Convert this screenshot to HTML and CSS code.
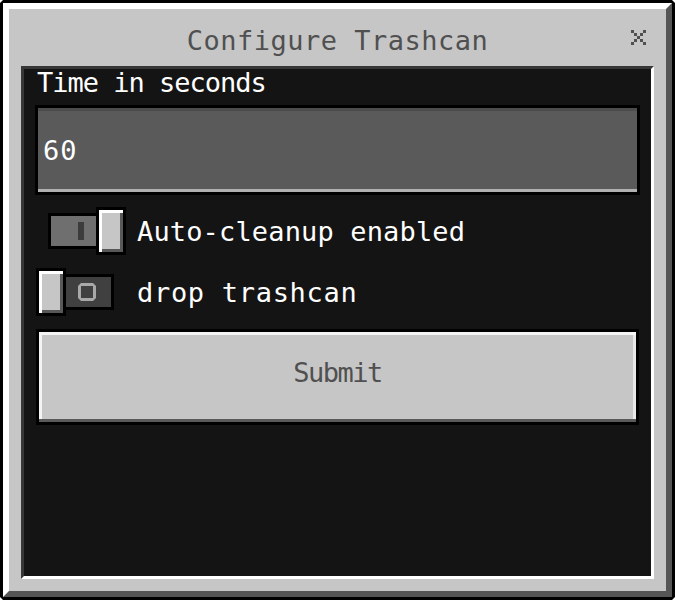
FILE: index.html
```html
<!DOCTYPE html>
<html lang="en">
<head>
    <meta charset="UTF-8">
    <title>Configure Trashcan</title>
    <link rel="stylesheet" href="styles.css">
</head>
<body>

<div class="frame">
    <div class="window">
        <div class="header">
            <div class="title">Configure Trashcan</div>
            <div class="close">
                <svg width="15" height="15" viewBox="0 0 5 5" shape-rendering="crispEdges">
                    <path d="M0 0h1v1H0zM4 0h1v1H4zM1 1h1v1H1zM3 1h1v1H3zM2 2h1v1H2zM1 3h1v1H1zM3 3h1v1H3zM0 4h1v1H0zM4 4h1v1H4z" fill="#505050"/>
                </svg>
            </div>
        </div>

        <div class="panel">
            <div class="label">Time in seconds</div>
            <div class="field">
                <span class="field-text">60</span>
            </div>

            <div class="toggle-row first">
                <div class="toggle on">
                    <div class="track"><span class="mark-on"></span></div>
                    <div class="knob"></div>
                </div>
                <span class="toggle-label auto">Auto-cleanup enabled</span>
            </div>

            <div class="toggle-row">
                <div class="toggle off">
                    <div class="knob"></div>
                    <div class="track"><span class="mark-off"></span></div>
                </div>
                <span class="toggle-label drop">drop trashcan</span>
            </div>

            <button class="submit">Submit</button>
        </div>
    </div>
</div>

</body>
</html>
```

FILE: styles.css
```css
html, body {
    margin: 0;
    height: 100%;
    background: #fff;
}

body {
    font-family: "DejaVu Sans Mono", monospace;
    font-size: 27px;
    line-height: 27px;
}

/* outer black outline with clipped pixel corners */
.frame {
    box-sizing: border-box;
    width: 675px;
    height: 600px;
    border: 3px solid #000;
    background: #000;
    clip-path: polygon(3px 0, calc(100% - 3px) 0, 100% 3px, 100% calc(100% - 3px), calc(100% - 3px) 100%, 3px 100%, 0 calc(100% - 3px), 0 3px);
}

.window {
    box-sizing: border-box;
    height: 100%;
    border-style: solid;
    border-width: 6px;
    border-color: #fff #555 #555 #fff;
    background: #c6c6c6;
    display: flex;
    flex-direction: column;
    padding: 0 12px 12px;
}

.header {
    display: grid;
    grid-template-columns: 1fr auto 1fr;
    padding: 18px 0 12px;
}

.title {
    grid-column: 2;
    color: #505050;
    letter-spacing: 0.5px;
    white-space: nowrap;
}

.close {
    grid-column: 3;
    justify-self: end;
    margin: 3px 8px 0 0;
    height: 15px;
}

.close svg {
    display: block;
}

.panel {
    flex: 1;
    display: flex;
    flex-direction: column;
    border-style: solid;
    border-width: 3px;
    border-color: #373737 #fff #fff #373737;
    background: #141414;
    padding: 0 11px;
}

.label {
    color: #fff;
    padding-left: 2px;
    letter-spacing: -1px;
}

.field {
    box-sizing: border-box;
    height: 90px;
    margin-top: 9px;
    border: 3px solid #000;
    background: #5a5a5a;
    box-shadow: inset 0 3px #4c4c4c, inset 0 -3px #b1b1b1;
    display: flex;
    align-items: center;
    padding-left: 5px;
}

.field-text {
    color: #fff;
    letter-spacing: 1px;
}

.toggle-row {
    display: flex;
    align-items: center;
    margin: 13px 0 0 1px;
}

.toggle-row.first {
    margin-top: 12px;
}

.toggle {
    display: flex;
    align-items: center;
    width: 90px;
    flex-shrink: 0;
}

.track {
    box-sizing: border-box;
    width: 51px;
    height: 36px;
    border: 3px solid #000;
    display: flex;
    align-items: center;
}

.knob {
    position: relative;
    z-index: 1;
    box-sizing: border-box;
    width: 30px;
    height: 48px;
    border: 3px solid #000;
    background: #c6c6c6;
    box-shadow: inset 3px 3px #fff, inset -3px -3px #585858;
}

.toggle.on .track {
    margin: 0 -3px 0 12px;
    background: #6f6f6f;
    padding-left: 27px;
}

.toggle.off .track {
    margin-left: -3px;
    background: #404040;
    padding-left: 12px;
}

.mark-on {
    width: 6px;
    height: 18px;
    background: #3c3c3c;
}

.mark-off {
    box-sizing: border-box;
    width: 18px;
    height: 18px;
    border: 3px solid #a8a8a8;
    clip-path: polygon(3px 0, 15px 0, 18px 3px, 18px 15px, 15px 18px, 3px 18px, 0 15px, 0 3px);
}

.toggle-label {
    color: #fff;
    margin-left: 11px;
    white-space: nowrap;
}

.toggle-label.auto {
    letter-spacing: 0.15px;
}

.toggle-label.drop {
    letter-spacing: 0.7px;
}

.submit {
    box-sizing: border-box;
    height: 96px;
    margin: 13px 1px 0;
    border: 3px solid #000;
    background: #c6c6c6;
    box-shadow: inset 0 -3px #5a5a5a, inset 3px 3px #f4f4f4, inset -3px 0 #e8e8e8;
    font-family: inherit;
    font-size: 27px;
    line-height: 27px;
    color: #505050;
    letter-spacing: -1.5px;
    padding: 0 0 9px;
    cursor: pointer;
}
```
